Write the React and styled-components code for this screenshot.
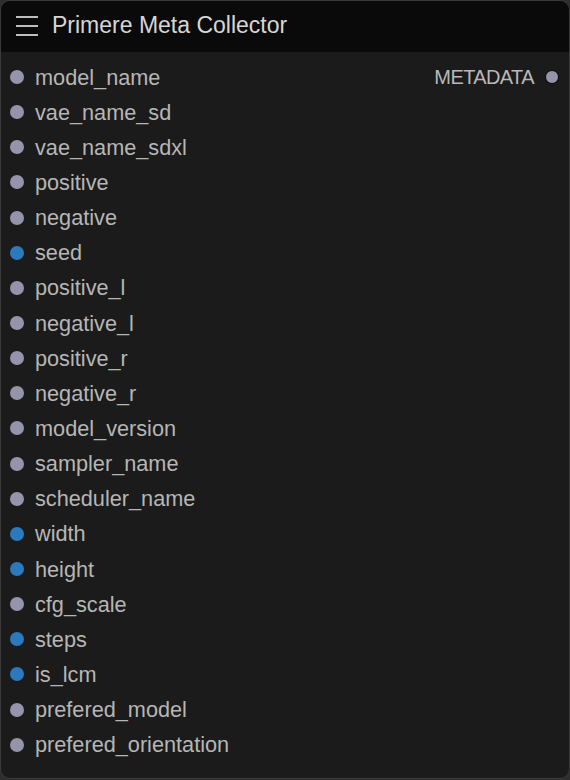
import React from 'react';
import styled, { createGlobalStyle } from 'styled-components';

const GlobalStyle = createGlobalStyle`
  html, body {
    margin: 0;
    padding: 0;
    background: #2e2e2e;
  }
  body {
    font-family: "Liberation Sans", Arial, sans-serif;
  }
`;

const Node = styled.div`
  width: 570px;
  height: 779px;
  box-sizing: border-box;
  border: 1px solid #3a3a3a;
  border-radius: 10px;
  background: #1b1b1b;
  overflow: hidden;
  display: flex;
  flex-direction: column;
`;

const TitleBar = styled.div`
  height: 51px;
  flex: none;
  background: #0a0a0a;
  display: flex;
  align-items: center;
  padding-left: 15px;
  gap: 14px;
`;

const Burger = styled.div`
  width: 22px;
  display: flex;
  flex-direction: column;
  gap: 7px;
  margin-top: -2px;

  span {
    display: block;
    height: 2px;
    background: #bdbdbd;
  }
`;

const Title = styled.div`
  color: #d6d6d6;
  font-size: 23px;
  margin-top: -2px;
`;

const Body = styled.div`
  display: flex;
  justify-content: space-between;
  padding-top: 8px;
`;

const Column = styled.div`
  display: flex;
  flex-direction: column;
`;

const Slot = styled.div`
  height: 35.15px;
  display: flex;
  align-items: center;
  gap: 11px;
  padding: 0 10px 0 9px;
  color: #b6b6b6;
  font-size: 21.7px;
  flex-direction: ${(p) => (p.$out ? 'row-reverse' : 'row')};
`;

const Dot = styled.span`
  width: 14px;
  height: 14px;
  border-radius: 50%;
  flex: none;
  box-sizing: border-box;
  background: ${(p) => (p.$blue ? '#2c79bd' : '#9694ab')};
  border: ${(p) => (p.$out ? '1.5px solid #050505' : 'none')};
  margin-top: -1px;
`;

const OutLabel = styled.span`
  font-size: 20px;
  letter-spacing: -0.6px;
  color: #b8b8b8;
`;

const inputs = [
  ['model_name'],
  ['vae_name_sd'],
  ['vae_name_sdxl'],
  ['positive'],
  ['negative'],
  ['seed', true],
  ['positive_l'],
  ['negative_l'],
  ['positive_r'],
  ['negative_r'],
  ['model_version'],
  ['sampler_name'],
  ['scheduler_name'],
  ['width', true],
  ['height', true],
  ['cfg_scale'],
  ['steps', true],
  ['is_lcm', true],
  ['prefered_model'],
  ['prefered_orientation'],
];

export default function App() {
  return (
    <>
      <GlobalStyle />
      <Node>
        <TitleBar>
          <Burger>
            <span />
            <span />
            <span />
          </Burger>
          <Title>Primere Meta Collector</Title>
        </TitleBar>
        <Body>
          <Column>
            {inputs.map(([name, blue]) => (
              <Slot key={name}>
                <Dot $blue={blue} />
                {name}
              </Slot>
            ))}
          </Column>
          <Column>
            <Slot $out>
              <Dot $out />
              <OutLabel>METADATA</OutLabel>
            </Slot>
          </Column>
        </Body>
      </Node>
    </>
  );
}
